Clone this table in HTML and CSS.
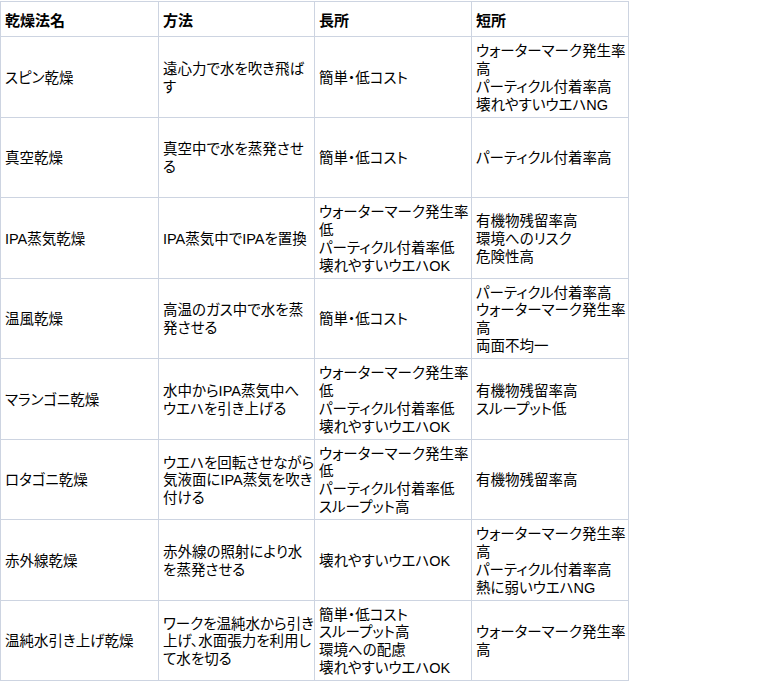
FILE: index.html
```html
<!DOCTYPE html>
<html lang="ja">
<head>
<meta charset="utf-8">
<title>乾燥法</title>
<link rel="stylesheet" href="styles.css">
</head>
<body>
<table class="dry-table">
  <colgroup>
    <col class="c1"><col class="c2"><col class="c3"><col class="c4">
  </colgroup>
  <thead>
    <tr class="head-row">
      <th>乾燥法名</th><th>方法</th><th>長所</th><th>短所</th>
    </tr>
  </thead>
  <tbody>
    <tr>
      <td>スピン乾燥</td>
      <td>遠心力で水を吹き飛ば<br>す</td>
      <td>簡単・低コスト</td>
      <td>ウォーターマーク発生率<br>高<br>パーティクル付着率高<br>壊れやすいウエハNG</td>
    </tr>
    <tr>
      <td>真空乾燥</td>
      <td>真空中で水を蒸発させ<br>る</td>
      <td>簡単・低コスト</td>
      <td>パーティクル付着率高</td>
    </tr>
    <tr>
      <td>IPA蒸気乾燥</td>
      <td>IPA蒸気中でIPAを置換</td>
      <td>ウォーターマーク発生率<br>低<br>パーティクル付着率低<br>壊れやすいウエハOK</td>
      <td>有機物残留率高<br>環境へのリスク<br>危険性高</td>
    </tr>
    <tr>
      <td>温風乾燥</td>
      <td>高温のガス中で水を蒸<br>発させる</td>
      <td>簡単・低コスト</td>
      <td>パーティクル付着率高<br>ウォーターマーク発生率<br>高<br>両面不均一</td>
    </tr>
    <tr>
      <td>マランゴニ乾燥</td>
      <td>水中からIPA蒸気中へ<br>ウエハを引き上げる</td>
      <td>ウォーターマーク発生率<br>低<br>パーティクル付着率低<br>壊れやすいウエハOK</td>
      <td>有機物残留率高<br>スループット低</td>
    </tr>
    <tr>
      <td>ロタゴニ乾燥</td>
      <td>ウエハを回転させながら<br>気液面にIPA蒸気を吹き<br>付ける</td>
      <td>ウォーターマーク発生率<br>低<br>パーティクル付着率低<br>スループット高</td>
      <td>有機物残留率高</td>
    </tr>
    <tr>
      <td>赤外線乾燥</td>
      <td>赤外線の照射により水<br>を蒸発させる</td>
      <td>壊れやすいウエハOK</td>
      <td>ウォーターマーク発生率<br>高<br>パーティクル付着率高<br>熱に弱いウエハNG</td>
    </tr>
    <tr>
      <td>温純水引き上げ乾燥</td>
      <td>ワークを温純水から引き<br>上げ、水面張力を利用し<br>て水を切る</td>
      <td>簡単・低コスト<br>スループット高<br>環境への配慮<br>壊れやすいウエハOK</td>
      <td>ウォーターマーク発生率<br>高</td>
    </tr>
  </tbody>
</table>
</body>
</html>
```

FILE: styles.css
```css
html, body {
  margin: 0;
  padding: 0;
  background: #ffffff;
}

body {
  padding-top: 1px;
  font-family: "Liberation Sans", "Noto Sans CJK JP", sans-serif;
  font-size: 14.5px;
  color: #000000;
  font-feature-settings: "palt";
}

.dry-table {
  table-layout: fixed;
  border-collapse: separate;
  border-spacing: 0;
  width: 629px;
  border-top: 1px solid #cdd4e1;
  border-left: 1px solid #cdd4e1;
}

.c1 { width: 158px; }
.c2 { width: 156px; }
.c3 { width: 157px; }
.c4 { width: 157px; }

.dry-table th,
.dry-table td {
  box-sizing: border-box;
  border-right: 1px solid #cdd4e1;
  border-bottom: 1px solid #cdd4e1;
  padding: 4px 2px 0 4px;
  text-align: left;
  vertical-align: middle;
  line-height: 17.8px;
  white-space: nowrap;
  overflow: hidden;
}

.dry-table th {
  height: 35px;
  font-weight: bold;
  font-size: 15px;
}

.dry-table td {
  height: 80.5px;
  font-weight: normal;
}
```
